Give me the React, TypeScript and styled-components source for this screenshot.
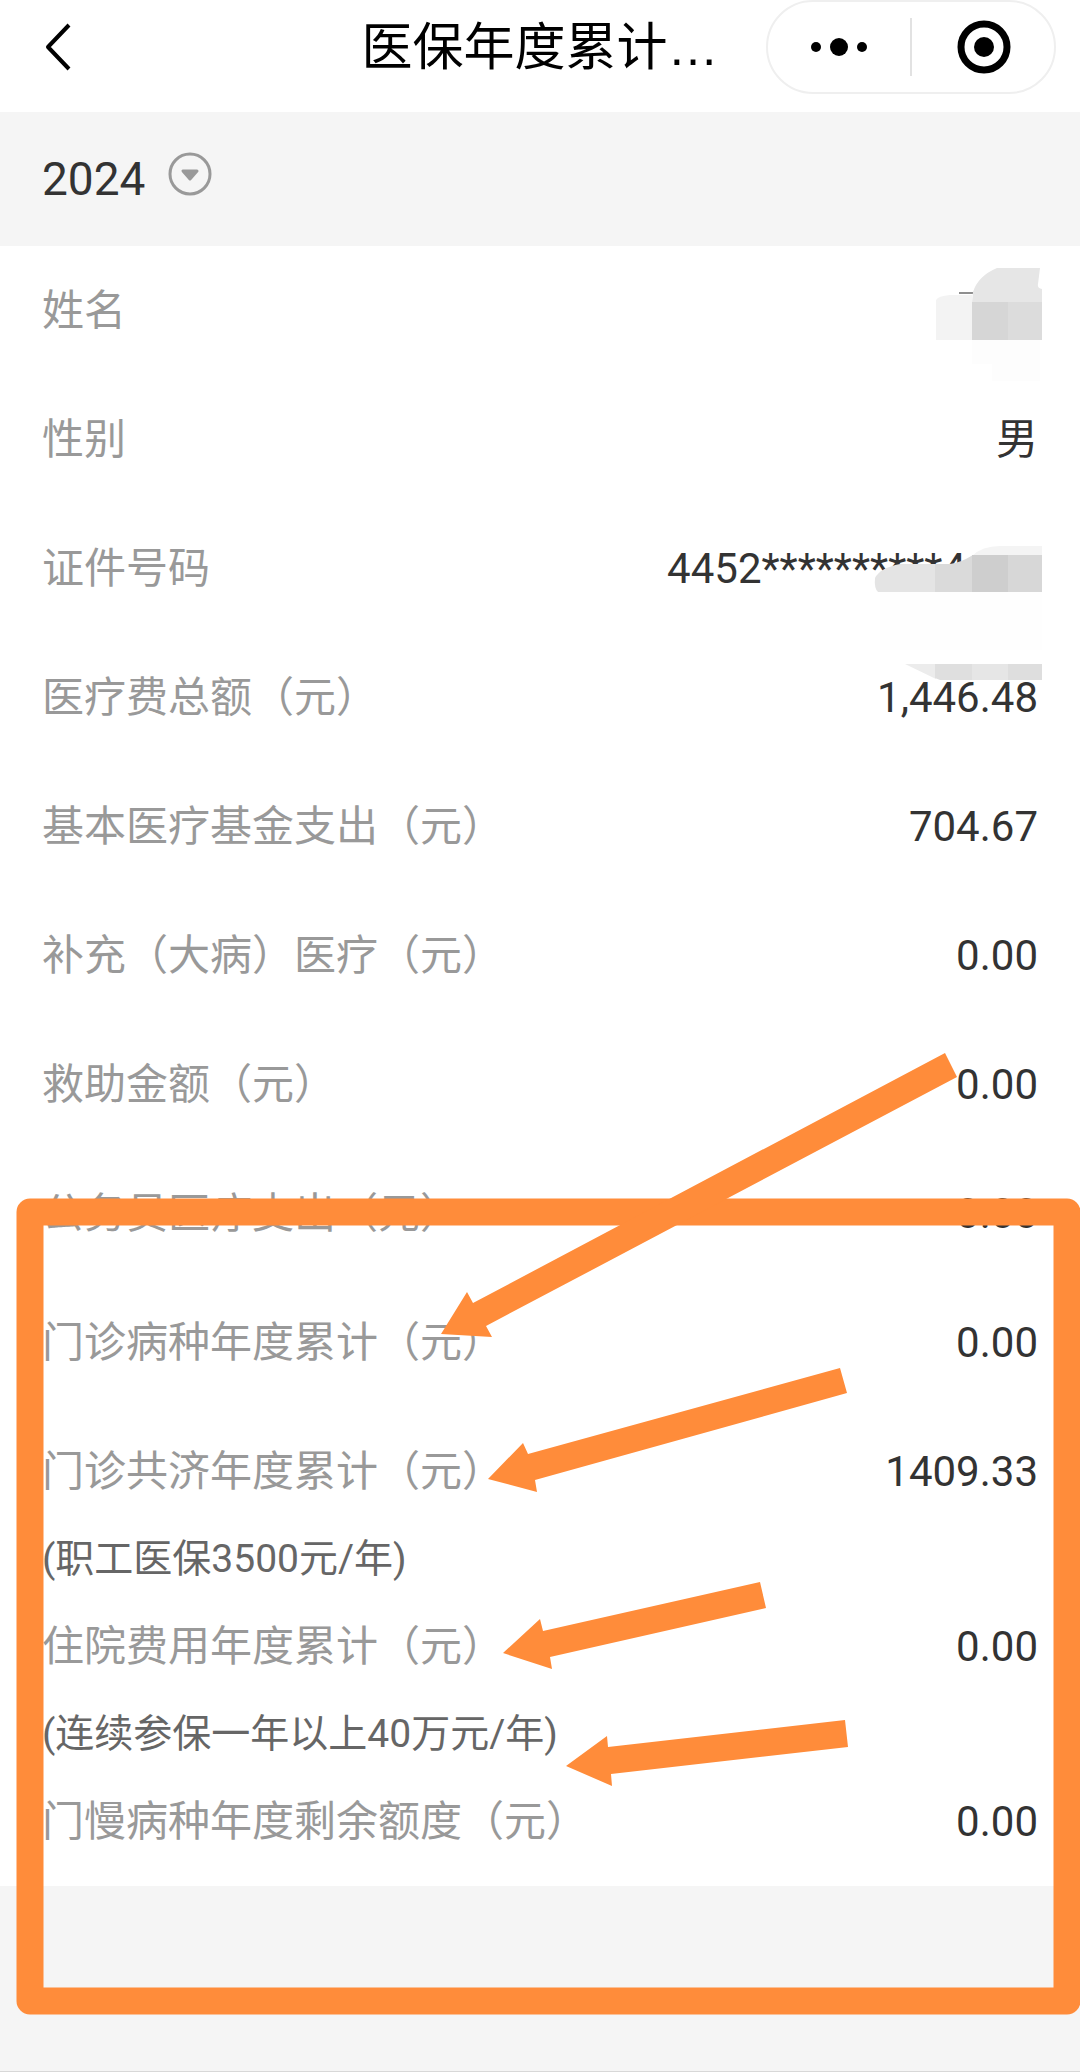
import React from "react";
import styled, { createGlobalStyle } from "styled-components";

const GlobalStyle = createGlobalStyle`
  *, *::before, *::after { box-sizing: border-box; }
  body { margin: 0; background: #f5f5f5; font-family: Roboto, "Noto Sans CJK SC", sans-serif; }
  button, select { font: inherit; color: inherit; border: 0; padding: 0; background: none; }
`;

const Page = styled.main`
  position: relative;
  display: flex;
  flex-direction: column;
  min-height: 100vh;
  overflow: hidden;
`;

const Header = styled.header`
  display: grid;
  grid-template-columns: 1fr auto 1fr;
  align-items: start;
  height: 112px;
  padding: 0 24px;
  background: #fff;
`;

const BackButton = styled.button`
  display: flex;
  align-items: center;
  justify-self: start;
  height: 94px;
  && { padding: 0 12px; }
`;

const Title = styled.h1`
  margin: 0;
  font-size: 51px;
  font-weight: 400;
  line-height: 96px;
  color: #000;
  white-space: nowrap;
`;

const Ellipsis = styled.span`
  font-family: "Liberation Sans", sans-serif;
  line-height: 1;
`;

const Capsule = styled.div`
  display: flex;
  align-items: center;
  justify-self: end;
  width: 290px;
  height: 94px;
  border: 2px solid #efefef;
  border-radius: 47px;
`;

const CapsuleButton = styled.button`
  display: flex;
  flex: 1;
  justify-content: center;
`;

const CapsuleDivider = styled.span`
  width: 2px;
  height: 58px;
  background: #e2e2e2;
`;

const YearBar = styled.label`
  display: flex;
  align-items: center;
  gap: 22px;
  height: 134px;
  padding: 0 42px;
  color: #333;
`;

const YearSelect = styled.select`
  appearance: none;
  font-size: 46px;
  line-height: 60px;
`;

const YearIcon = styled.svg`
  display: block;
  margin-bottom: 10px;
`;

const Records = styled.dl`
  margin: 0;
  padding: 0 42px;
  background: #fff;
`;

const Row = styled.div`
  display: grid;
  grid-template-columns: 1fr auto;
  font-size: 42px;
  line-height: 129px;
`;

const Label = styled.dt`
  color: #999;
`;

const Value = styled.dd`
  display: flex;
  margin: 0;
  color: #333;
`;

const HiddenDigits = styled.span`
  width: 72px;
`;

const Note = styled.dd`
  grid-column: 1 / -1;
  margin: 0;
  color: #666;
  font-size: 39px;
  line-height: 46px;
`;

const Footer = styled.footer`
  flex: 1;
  min-height: 186px;
  border-bottom: 1px solid #d8d8d8;
`;

const Markup = styled.svg`
  position: absolute;
  top: 0;
  left: 0;
  width: 100%;
  height: 2072px;
  pointer-events: none;
`;

type RecordItem = { label: string; value?: string; masked?: boolean; note?: string };

const records: RecordItem[] = [
  { label: "姓名" },
  { label: "性别", value: "男" },
  { label: "证件号码", value: "4452**********4", masked: true },
  { label: "医疗费总额（元）", value: "1,446.48" },
  { label: "基本医疗基金支出（元）", value: "704.67" },
  { label: "补充（大病）医疗（元）", value: "0.00" },
  { label: "救助金额（元）", value: "0.00" },
  { label: "公务员医疗支出（元）", value: "0.00" },
  { label: "门诊病种年度累计（元）", value: "0.00" },
  { label: "门诊共济年度累计（元）", value: "1409.33", note: "(职工医保3500元/年)" },
  { label: "住院费用年度累计（元）", value: "0.00", note: "(连续参保一年以上40万元/年)" },
  { label: "门慢病种年度剩余额度（元）", value: "0.00" },
];

const arrows = [
  "945,1053 957,1077 486,1326 492,1337 441,1334 467,1292 473,1303",
  "840,1368 847,1393 535,1480 537,1492 488,1479 523,1443 528,1454",
  "760,1582 766,1608 550,1657 552,1669 503,1653 540,1619 543,1631",
  "845,1720 848,1747 611,1774 612,1786 566,1766 607,1736 608,1747",
];

/* Mosaic over the private name and ID digits */
function Mosaic() {
  return (
    <g>
      <rect x="959" y="292" width="14" height="2" fill="#8f8f8f" />
      <path d="M972 339H1040V381H992V364H972Z" fill="#fdfdfd" />
      <path d="M936 300Q938 296 950 295H972V340H936Z" fill="#f3f3f3" />
      <path d="M973 292Q978 276 997 268H1040L1038 284Q1037 288 1042 289V303H972Z" fill="#e6e6e6" />
      <rect x="972" y="302" width="36" height="38" fill="#d6d6d6" />
      <rect x="1008" y="302" width="34" height="38" fill="#dcdcdc" />
      <path d="M972 556Q982 546 1000 546H1042V556Z" fill="#f4f4f4" />
      <path d="M878 592Q874 588 875 578Q880 568 900 564H936V592Z" fill="#e4e4e4" />
      <path d="M935 564H950Q960 563 973 555V592H935Z" fill="#dadada" />
      <rect x="972" y="555" width="36" height="37" fill="#cecece" />
      <rect x="1008" y="555" width="34" height="37" fill="#d7d7d7" />
      <path d="M880 592H1042V650H880Z" fill="#fefefe" />
      <path d="M905 664H936V679Z" fill="#ececec" />
      <path d="M935 664H973V680H940L935 678Z" fill="#dfdfdf" />
      <rect x="972" y="664" width="36" height="16" fill="#e6e6e6" />
      <rect x="1008" y="664" width="34" height="16" fill="#dedede" />
    </g>
  );
}

export default function App() {
  return (
    <Page>
      <GlobalStyle />
      <Header>
        <BackButton aria-label="返回">
          <svg width="44" height="52" viewBox="0 0 44 52" fill="none" stroke="#000" strokeWidth="4">
            <path d="M33 4L12 26L33 48" strokeLinejoin="round" />
          </svg>
        </BackButton>
        <Title>
          医保年度累计<Ellipsis>…</Ellipsis>
        </Title>
        <Capsule>
          <CapsuleButton aria-label="更多">
            <svg width="60" height="54" viewBox="0 0 60 54">
              <circle cx="7" cy="27" r="5" />
              <circle cx="30" cy="27" r="9" />
              <circle cx="53" cy="27" r="5" />
            </svg>
          </CapsuleButton>
          <CapsuleDivider />
          <CapsuleButton aria-label="关闭">
            <svg width="56" height="54" viewBox="0 0 56 54">
              <circle cx="29" cy="27" r="23" fill="none" stroke="#000" strokeWidth="7" />
              <circle cx="29" cy="27" r="10" />
            </svg>
          </CapsuleButton>
        </Capsule>
      </Header>

      <YearBar>
        <YearSelect aria-label="年度" defaultValue="2024">
          <option value="2024">2024</option>
        </YearSelect>
        <YearIcon width="44" height="44" viewBox="0 0 44 44">
          <circle cx="22" cy="22" r="20" fill="none" stroke="#999" strokeWidth="3" />
          <path
            d="M15 19H29L22 27Z"
            fill="#999"
            stroke="#999"
            strokeWidth="3"
            strokeLinejoin="round"
          />
        </YearIcon>
      </YearBar>

      <Records>
        {records.map((r) => (
          <Row key={r.label}>
            <Label>{r.label}</Label>
            <Value>
              {r.value}
              {r.masked && <HiddenDigits />}
            </Value>
            {r.note && <Note>{r.note}</Note>}
          </Row>
        ))}
      </Records>
      <Footer />

      <Markup viewBox="0 0 1080 2072" preserveAspectRatio="none" aria-hidden="true">
        <Mosaic />
        <rect
          x="30"
          y="1212"
          width="1037"
          height="789"
          fill="none"
          stroke="#ff8c3a"
          strokeWidth="27"
          strokeLinejoin="round"
        />
        {arrows.map((points) => (
          <polygon key={points} points={points} fill="#ff8c3a" />
        ))}
      </Markup>
    </Page>
  );
}
